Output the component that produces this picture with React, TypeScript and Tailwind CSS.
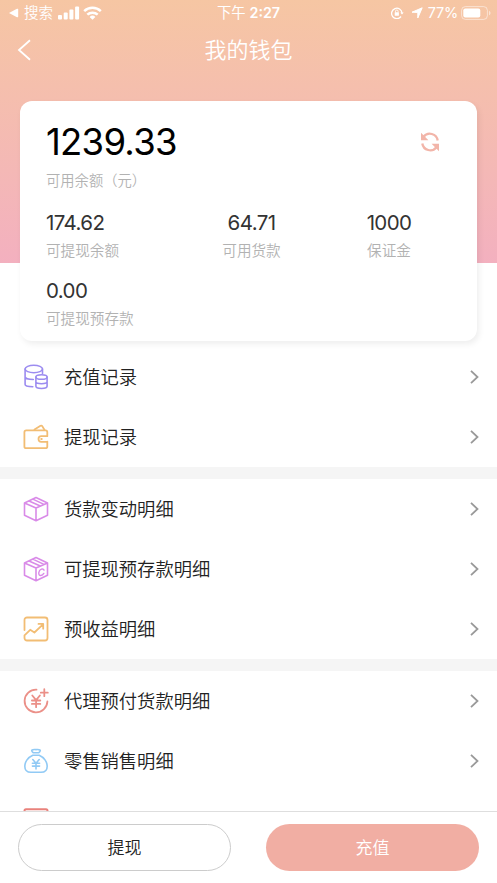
import type { ReactNode } from "react";

interface MenuItem {
  label: string;
  icon: ReactNode;
}

interface StatProps {
  value: string;
  label: string;
  className?: string;
}

const iconProps = {
  width: 26,
  height: 26,
  viewBox: "0 0 26 26",
  fill: "none",
  strokeWidth: 1.6,
  strokeLinecap: "round" as const,
  strokeLinejoin: "round" as const,
};

function CoinsIcon() {
  return (
    <svg {...iconProps} stroke="#9c8cf0">
      <ellipse cx="10.8" cy="5" rx="8.7" ry="3.7" />
      <path d="M2.1 5v15.500c0 1.300 3.200 2.100 7.700 2.200M19.500 5v4.500M2.100 12.800c0 1.500 3.500 2.700 8.200 2.700" />
      <ellipse cx="18.500" cy="13" rx="5.600" ry="2.300" />
      <path d="M12.900 13v9.300c0 1.200 2.500 2.200 5.600 2.200s5.600-1 5.600-2.200V13M12.900 17.800c0 1.200 2.500 1.900 5.600 1.900s5.600-.7 5.600-1.900" />
    </svg>
  );
}

function WalletIcon() {
  return (
    <svg {...iconProps} stroke="#f2bd74" strokeWidth={1.800}>
      <path d="M24.300 11.700V8.200a1.800 1.800 0 0 0-1.800-1.800H3.200a1.800 1.800 0 0 0-1.800 1.800v14.200a1.800 1.800 0 0 0 1.800 1.800h19.300a1.800 1.800 0 0 0 1.800-1.800v-4.700" />
      <path d="M24.300 12.200h-6a2.800 2.800 0 0 0 0 5.600h6M11.500 5.500l6-3.700c.8-.4 1.500-.1 1.900.6l2 3.400M18.200 15h.6" />
    </svg>
  );
}

function BoxIcon({ marked = false }: { marked?: boolean }) {
  return (
    <svg {...iconProps} stroke="#d98be8">
      <path d="M13 1.500 24.500 7v12.200L13 24.700 1.500 19.200V7zM1.500 7 13 12l11.500-5M13 12v12.700M6 4.900l11.300 5.100M9.800 3.100l11.200 5.300" />
      {marked && (
        <path d="M21 14.200c-.6-2.400-4.700-1.200-5.200 2.500-.4 3.700 3.400 3.600 5 .7" strokeWidth="1.400" />
      )}
    </svg>
  );
}

function TrendIcon() {
  return (
    <svg {...iconProps} stroke="#f2bd74" strokeWidth={1.800}>
      <path d="M1.500 14V4A2.500 2.500 0 0 1 4 1.500h18A2.500 2.500 0 0 1 24.500 4v18a2.500 2.500 0 0 1-2.500 2.500H4A2.500 2.500 0 0 1 1.500 22v-2.700l5.700-5.500 4.200 2.700 8.600-8.200M15.500 7.900H20.200v4.800" />
    </svg>
  );
}

function PrepaidIcon() {
  return (
    <svg {...iconProps} stroke="#eb9088" strokeWidth={1.800}>
      <path d="M13.500 1.600A11.400 11.400 0 1 0 24.400 13.500M21.300 1.200v7M17.800 4.700h7" />
      <path d="m9.300 7.500 3.800 4.600 3.800-4.600M8.900 12.500h8.400M8.900 15.900h8.400M13.100 12.500v6.700" />
    </svg>
  );
}

function MoneyBagIcon() {
  return (
    <svg {...iconProps} stroke="#91caf5">
      <path d="M10.300 4.700C9 4 8.600 3.100 8.800 2.100c1.300-.8 2.500-.5 4.200-.5s2.900-.3 4.200.5c.2 1-.2 1.900-1.500 2.600zM9.800 7.300C4.500 9.500 1.800 14.400 1.800 18.300c0 4 2.700 6 6.200 6h10c3.500 0 6.200-2 6.200-6 0-3.900-2.700-8.800-8-11z" />
      <path d="m9.800 11.500 3.200 3.700 3.200-3.700M9.400 15.200h7.200M9.400 18.100h7.200M13 15.200v5.700" />
    </svg>
  );
}

function BillIcon() {
  return (
    <svg {...iconProps} stroke="#e9827c" strokeWidth={2}>
      <rect x="1.500" y="1.300" width="23" height="23" rx="1.500" />
    </svg>
  );
}

const menuGroups: MenuItem[][] = [
  [
    { label: "充值记录", icon: <CoinsIcon /> },
    { label: "提现记录", icon: <WalletIcon /> },
  ],
  [
    { label: "货款变动明细", icon: <BoxIcon /> },
    { label: "可提现预存款明细", icon: <BoxIcon marked /> },
    { label: "预收益明细", icon: <TrendIcon /> },
  ],
  [
    { label: "代理预付货款明细", icon: <PrepaidIcon /> },
    { label: "零售销售明细", icon: <MoneyBagIcon /> },
    { label: "", icon: <BillIcon /> },
  ],
];

function StatusBar() {
  return (
    <div className="grid h-[26px] grid-cols-[1fr_auto_1fr] items-center pr-[6px] pl-[9px] text-[14.500px] leading-5">
      <div className="flex items-center">
        <svg width="10" height="10" viewBox="0 0 10 10" fill="currentColor">
          <path d="M0 5 8 .800q1.200-.5 1.200.600v7.200q0 1.100-1.200.600z" />
        </svg>
        <span className="ml-[5px] font-[350]">搜索</span>
        <svg className="ml-[5px]" width="22" height="14" viewBox="0 0 22 14" fill="currentColor">
          <rect x="0" y="9" width="4" height="4.500" rx="1" />
          <rect x="5.700" y="6.500" width="4" height="7" rx="1" />
          <rect x="11.400" y="3.500" width="4" height="10" rx="1" />
          <rect x="17.100" y=".5" width="4" height="13" rx="1" />
        </svg>
        <svg className="ml-[3px]" width="19" height="14" viewBox="0 0 19 14" fill="none" stroke="currentColor" strokeWidth="2.500">
          <path d="M1.200 5.100a12 12 0 0 1 16.600 0M4.300 8.700a7.600 7.600 0 0 1 10.400 0" />
          <path d="M9.500 13.700 6.600 10.900a4.200 4.200 0 0 1 5.800 0z" fill="currentColor" stroke="none" />
        </svg>
      </div>
      <span className="-ml-[3px] text-[14.300px]">
        下午 <span className="font-semibold">2:27</span>
      </span>
      <div className="flex items-center justify-end">
        <svg width="13" height="12" viewBox="0 0 13 12" fill="none" stroke="currentColor" strokeWidth="1.300">
          <path d="M10 9.500A5.200 5.200 0 1 1 11 6" />
          <path d="m9.300 5.600 1.700 2 1.700-2z" fill="currentColor" stroke="none" />
          <rect x="3.700" y="5.300" width="4.200" height="3.500" rx=".5" fill="currentColor" stroke="none" />
          <path d="M4.500 5.500V4.300a1.300 1.300 0 0 1 2.600 0v1.200" strokeWidth=".9" />
        </svg>
        <svg className="ml-[7px]" width="12" height="12" viewBox="0 0 12 12" fill="currentColor" stroke="currentColor" strokeWidth="1" strokeLinejoin="round">
          <path d="M11.200.800 6.800 11V5.500L1 5.200z" />
        </svg>
        <span className="ml-[5px] tracking-[-0.2px]">77%</span>
        <svg className="ml-[3px]" width="30" height="14" viewBox="0 0 30 14" fill="none">
          <rect x=".600" y=".600" width="25.800" height="12.800" rx="3.800" stroke="white" strokeOpacity=".5" />
          <rect x="2.300" y="2.500" width="17" height="9" rx="2" fill="white" />
          <path d="M28 4.700c2 .8 2 3.800 0 4.600z" fill="white" fillOpacity=".5" />
        </svg>
      </div>
    </div>
  );
}

function NavBar() {
  return (
    <div className="grid h-[48px] grid-cols-[1fr_auto_1fr] items-center px-[17px]">
      <svg width="15" height="22" viewBox="0 0 15 22" fill="none" stroke="currentColor" strokeWidth="1.800">
        <path d="M13 1.300 2 11l11 9.700" />
      </svg>
      <h1 className="text-[22px] font-[350]">我的钱包</h1>
    </div>
  );
}

function Stat({ value, label, className = "" }: StatProps) {
  return (
    <div className={className}>
      <p className="text-[20.500px] leading-6 tracking-[-0.6px] text-[#333]">{value}</p>
      <p className="mt-1.5 text-[14.600px] leading-5 font-[350] text-[#b2b2b2]">{label}</p>
    </div>
  );
}

function BalanceCard() {
  return (
    <section className="relative mx-5 -mt-[162px] h-[240px] rounded-[12px] bg-white pr-4 pl-[26px] pt-5 shadow-[2px_3px_6px_rgba(0,0,0,0.07)]">
      <div className="flex h-[42px] items-center justify-between pr-[21px]">
        <p className="text-[36.500px] leading-[42px] tracking-[-0.75px] text-black">1239.33</p>
        <svg width="20" height="20" viewBox="0 0 20 20" fill="none" stroke="#f2b5a9" strokeWidth="2.300">
          <path d="M3.500 4.800A8 8 0 0 1 17.700 8.500M16.500 15.200A8 8 0 0 1 2.300 11.500" />
          <path d="M1 .800v7.400h7.400zM19 19.200v-7.400h-7.400z" fill="#f2b5a9" stroke="none" />
        </svg>
      </div>
      <p className="mt-2 text-[14.300px] leading-5 font-[350] text-[#b2b2b2]">可用余额（元）</p>
      <div className="mt-5 flex">
        <Stat value="174.62" label="可提现余额" className="w-[137px]" />
        <Stat value="64.71" label="可用货款" className="w-[137px] text-center" />
        <Stat value="1000" label="保证金" className="w-[138px] text-center" />
      </div>
      <Stat value="0.00" label="可提现预存款" className="mt-[18px]" />
    </section>
  );
}

function MenuRow({ label, icon }: MenuItem) {
  return (
    <li className="flex h-[60px] items-center pr-[18px] pl-[23px]">
      {icon}
      <span className="ml-[15px] flex-1 pt-[2px] text-[18.300px] font-[350] text-[#222]">{label}</span>
      <svg width="9" height="14" viewBox="0 0 9 14" fill="none" stroke="#999" strokeWidth="1.800">
        <path d="m1 .800 6.500 6.200L1 13.200" />
      </svg>
    </li>
  );
}

export default function App() {
  return (
    <div className="flex h-[883px] w-[497px] flex-col overflow-hidden bg-white font-['Inter','Noto_Sans_CJK_SC',sans-serif]">
      <main className="min-h-0 flex-1 overflow-hidden">
        {/* Header */}
        <header className="h-[263px] bg-linear-to-b from-[#f6c6a3] to-[#f3b0bf] text-white">
          <StatusBar />
          <NavBar />
        </header>

        <BalanceCard />

        {/* Menu */}
        <div className="mt-1.5 space-y-3 bg-[#f5f5f5]">
          {menuGroups.map((group, index) => (
            <ul key={index} className="bg-white">
              {group.map((item) => (
                <MenuRow key={item.label} {...item} />
              ))}
            </ul>
          ))}
        </div>
      </main>

      {/* Actions */}
      <footer className="flex h-[72px] shrink-0 justify-between border-t border-[#dedede] bg-white px-[18px] pt-3 text-[17px] font-[350]">
        <button className="h-[47px] w-[213px] rounded-full border border-[#ccc] pt-[2px] text-[#222]">提现</button>
        <button className="h-[47px] w-[213px] rounded-full bg-[#f1aea3] pt-[2px] text-white">充值</button>
      </footer>
    </div>
  );
}
